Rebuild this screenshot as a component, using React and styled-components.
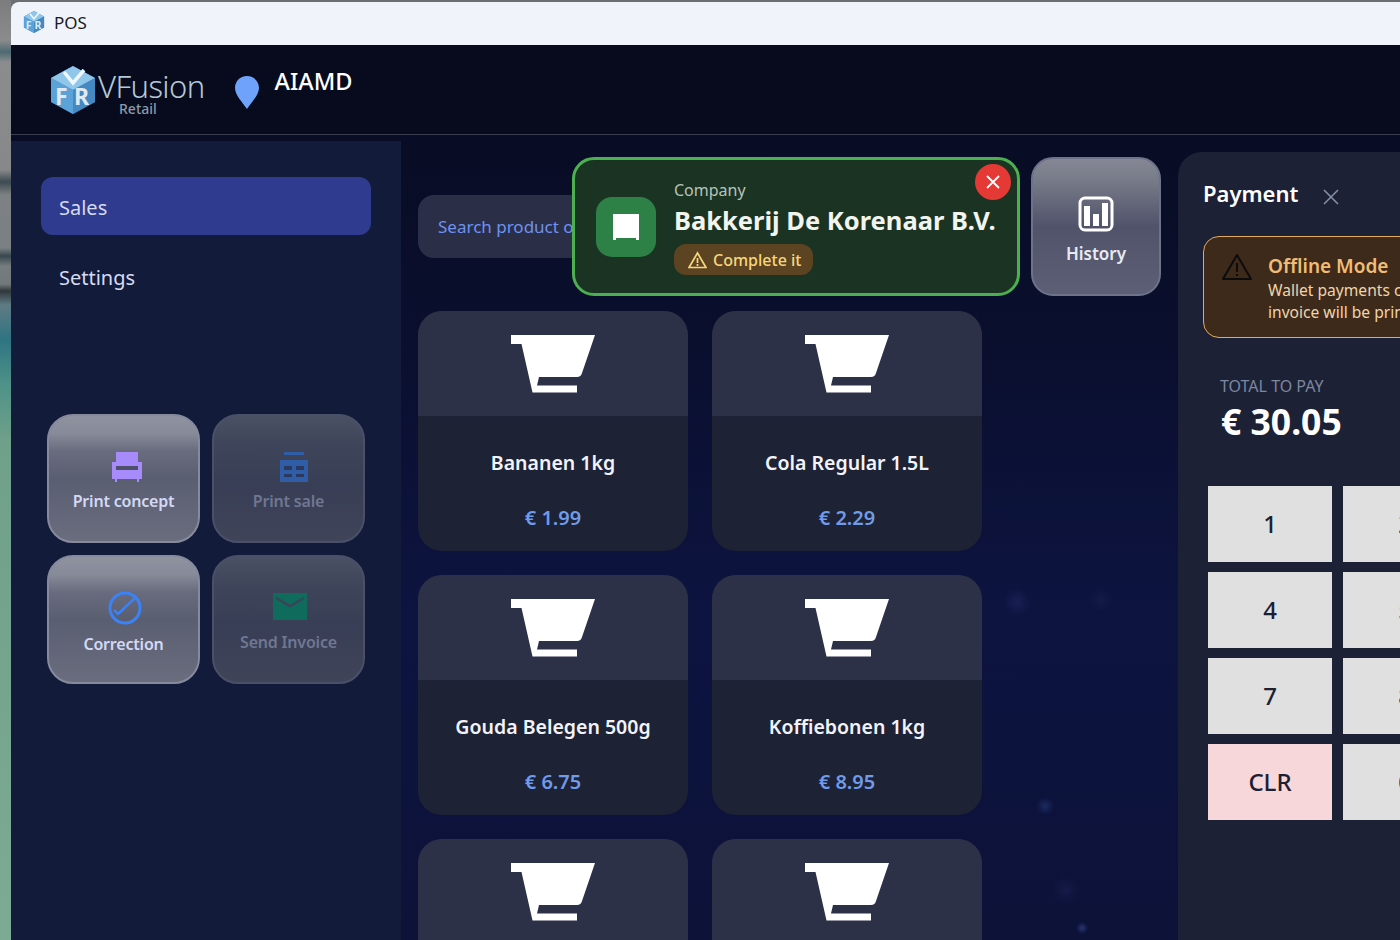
import React from "react";
import styled, { createGlobalStyle } from "styled-components";

const GlobalStyle = createGlobalStyle`
  html, body { margin: 0; padding: 0; background: #5a6066; overflow: hidden; }
  * { box-sizing: border-box; }
  body { font-family: "Noto Sans", "Open Sans", sans-serif; }
`;

const products = [
  { name: "Bananen 1kg", price: "€ 1.99" },
  { name: "Cola Regular 1.5L", price: "€ 2.29" },
  { name: "Gouda Belegen 500g", price: "€ 6.75" },
  { name: "Koffiebonen 1kg", price: "€ 8.95" },
  { name: "", price: "" },
  { name: "", price: "" },
];

const keys = ["1", "2", "3", "4", "5", "6", "7", "8", "9", "CLR", "0", "."];

const LogoCube = ({ size }) => (
  <svg width={size} height={size} viewBox="0 0 48 48">
    <path d="M24 0 46 12V36L24 48 2 36V12Z" fill="#3f86c4" />
    <path d="M24 0 46 12 24 24 2 12Z" fill="#8fc6ea" />
    <path d="M2 12 24 24V48L2 36Z" fill="#5ba2d8" />
    <path d="M24 24 46 12V36L24 48Z" fill="#4489c2" />
    <path d="M15 6 24 17 35 4" fill="none" stroke="#eef7fd" strokeWidth="3.500" />
    <text x="6" y="39" fontSize="23" fontWeight="700" fill="#dfeaf3" fontFamily="Noto Sans">F</text>
    <text x="25" y="39" fontSize="23" fontWeight="700" fill="#dfeaf3" fontFamily="Noto Sans">R</text>
  </svg>
);

const CartIcon = () => (
  <svg width="84" height="58" viewBox="0 0 84 58">
    <path d="M0 0H84L71 38Q70 42 66 42H28L26 50.500H66V57.500H21.500L10.500 9H0Z" fill="#fff" />
  </svg>
);

const PrintConceptIcon = () => (
  <svg width="30" height="30" viewBox="0 0 30 30">
    <path d="M4 0H26V10H30V27H27V30H25V27H5V30H3V27H0V10H4Z" fill="#a78bfa" />
    <rect x="4" y="14" width="22" height="4" fill="#4d5068" />
  </svg>
);

const PrintSaleIcon = () => (
  <svg width="28" height="30" viewBox="0 0 28 30">
    <rect x="4" y="0" width="20" height="3" fill="#2f5da8" />
    <rect x="0" y="8" width="28" height="22" fill="#2f5da8" />
    <path d="M4 14H12V18H4ZM16 14H24V18H16ZM4 22H12V25H4ZM16 22H24V25H16Z" fill="#2a3a5e" />
  </svg>
);

const CorrectionIcon = () => (
  <svg width="34" height="34" viewBox="0 0 34 34" fill="none" stroke="#3b82f6">
    <circle cx="17" cy="17" r="15" strokeWidth="3" />
    <path d="M6 19 10 23 27 7" strokeWidth="2.500" />
  </svg>
);

const MailIcon = () => (
  <svg width="34" height="30" viewBox="0 0 34 30">
    <rect width="34" height="27" fill="#0f6b5c" />
    <path d="M3 5 17 13 31 5" fill="none" stroke="#3b4358" strokeWidth="2.500" />
  </svg>
);

const HistoryIcon = () => (
  <svg width="36" height="36" viewBox="0 0 36 36">
    <rect x="2" y="2" width="32" height="32" rx="5" fill="none" stroke="#fff" strokeWidth="3" />
    <path d="M6 10H12V30H6ZM15 18H21V30H15ZM24 7H30V30H24Z" fill="#fff" />
  </svg>
);

const App = () => (
  <>
    <GlobalStyle />
    <Screen>
      <Wallpaper />
      <Win>
        <TitleBar>
          <LogoCube size={22} />
          <span>POS</span>
        </TitleBar>
        <Header>
          <LogoCube size={48} />
          <Brand>
            <BrandName>VFusion</BrandName>
            <BrandSub>Retail</BrandSub>
          </Brand>
          <Pin viewBox="0 0 24 33" width="24" height="33">
            <path d="M12 0C5 0 0 5.500 0 12 0 19 8 27 12 33 16 27 24 19 24 12 24 5.500 19 0 12 0Z" fill="#6ea2fb" />
          </Pin>
          <StoreName>AIAMD</StoreName>
        </Header>
        <Body>
          <Sidebar>
            <NavItem $active>Sales</NavItem>
            <NavItem>Settings</NavItem>
            <ActionGrid>
              <GlassButton $shift={6}>
                <PrintConceptIcon />
                <span>Print concept</span>
              </GlassButton>
              <GlassButton $dim $shift={10}>
                <PrintSaleIcon />
                <span>Print sale</span>
              </GlassButton>
              <GlassButton $shift={2}>
                <CorrectionIcon />
                <span>Correction</span>
              </GlassButton>
              <GlassButton $dim $shift={2}>
                <MailIcon />
                <span>Send Invoice</span>
              </GlassButton>
            </ActionGrid>
          </Sidebar>
          <Main>
            <Toolbar>
              <SearchBox>Search product or scan barcode</SearchBox>
              <HistoryButton>
                <HistoryIcon />
                <span>History</span>
              </HistoryButton>
              <CompanyBanner>
                <CompanyIcon>
                  <svg width="26" height="26" viewBox="0 0 26 26">
                    <path d="M0 0H26V26H23V24H3V26H0Z" fill="#fff" />
                  </svg>
                </CompanyIcon>
                <CompanyText>
                  <CompanyLabel>Company</CompanyLabel>
                  <CompanyName>Bakkerij De Korenaar B.V.</CompanyName>
                  <CompleteTag>
                    <svg width="19" height="18" viewBox="0 0 19 18" fill="none" stroke="#f6d77c" strokeWidth="1.700">
                      <path d="M9.500 2 18 16.500H1Z" />
                      <path d="M9.500 7V12M9.500 13V15" />
                    </svg>
                    Complete it
                  </CompleteTag>
                </CompanyText>
                <CloseRound>
                  <svg width="16" height="16" viewBox="0 0 16 16" stroke="#fff" strokeWidth="1.800">
                    <path d="M2 2 14 14M14 2 2 14" />
                  </svg>
                </CloseRound>
              </CompanyBanner>
            </Toolbar>
            <ProductGrid>
              {products.map((p, i) => (
                <ProductCard key={i}>
                  <ProductImage>
                    <CartIcon />
                  </ProductImage>
                  <ProductName>{p.name}</ProductName>
                  <ProductPrice>{p.price}</ProductPrice>
                </ProductCard>
              ))}
            </ProductGrid>
          </Main>
          <Payment>
            <PaymentHead>
              <PaymentTitle>Payment</PaymentTitle>
              <CloseIcon width="18" height="18" viewBox="0 0 18 18" stroke="#8791a8" strokeWidth="1.500">
                <path d="M2 2 16 16M16 2 2 16" />
              </CloseIcon>
            </PaymentHead>
            <OfflineBox>
              <svg width="32" height="28" viewBox="0 0 32 28" fill="none" stroke="#0c0c0c" strokeWidth="2" strokeLinejoin="round">
                <path d="M16 2 30 26H2Z" />
                <path d="M16 10V19M16 21V23" />
              </svg>
              <OfflineText>
                <OfflineTitle>Offline Mode</OfflineTitle>
                <OfflineLine>Wallet payments can not be used, the</OfflineLine>
                <OfflineLine>invoice will be printed afterwards</OfflineLine>
              </OfflineText>
            </OfflineBox>
            <TotalLabel>TOTAL TO PAY</TotalLabel>
            <TotalAmount>€ 30.05</TotalAmount>
            <Keypad>
              {keys.map((k) => (
                <Key key={k} $clear={k === "CLR"}>{k}</Key>
              ))}
            </Keypad>
          </Payment>
        </Body>
      </Win>
    </Screen>
  </>
);

export default App;

const Screen = styled.div`
  display: flex;
  width: 1400px;
  height: 940px;
  overflow: hidden;
  background: #6b6f72;
`;
const Wallpaper = styled.div`
  flex: 0 0 11px;
  background: linear-gradient(180deg,
    #7c7c7e 0, #8b8b8d 40px, #4d6a72 52px, #8a8c8e 62px, #86888a 170px, #3d4a50 182px,
    #7d8184 195px, #7a8084 248px, #37474d 256px, #747c80 266px, #72797d 284px, #30383c 291px,
    #5f7b84 305px, #2f7482 340px, #4f9288 385px, #6fa08a 440px, #7daa92 100%);
`;
const Win = styled.div`
  flex: 1;
  min-width: 0;
  display: flex;
  flex-direction: column;
  margin-top: 2px;
  border-top-left-radius: 8px;
  overflow: hidden;
`;
const TitleBar = styled.div`
  flex: 0 0 43px;
  display: flex;
  align-items: center;
  gap: 9px;
  padding: 0 0 3px 12px;
  background: #f0f3f9;
  color: #1a1a1a;
  font-size: 17px;
`;
const Header = styled.div`
  flex: 0 0 90px;
  display: flex;
  align-items: flex-start;
  padding: 21px 0 0 38px;
  background: #080b1e;
  border-bottom: 1px solid #3a3d4c;
`;
const Brand = styled.div`
  display: flex;
  flex-direction: column;
  align-items: flex-start;
  margin: 5px 0 0 1px;
`;
const BrandName = styled.div`
  font-size: 31px;
  line-height: 31px;
  letter-spacing: -0.6px;
  color: #b4c8d8;
  font-weight: 300;
`;
const BrandSub = styled.div`
  font-size: 14px;
  line-height: 14px;
  margin-left: 21px;
  color: #8a9aa8;
  font-weight: 500;
`;
const Pin = styled.svg`
  margin: 10px 0 0 30px;
`;
const StoreName = styled.div`
  margin: -1px 0 0 16px;
  font-size: 23.500px;
  line-height: 33px;
  font-weight: 500;
  color: #fff;
`;
const Body = styled.div`
  flex: 1;
  min-height: 0;
  display: flex;
  background:
    radial-gradient(circle 9px at 1034px 671px, #1a2a60 0%, transparent 100%),
    radial-gradient(circle 14px at 1006px 467px, #191f52 0%, transparent 100%),
    radial-gradient(circle 12px at 1090px 465px, #151a48 0%, transparent 100%),
    radial-gradient(circle 6px at 1071px 793px, #2a3570 0%, transparent 100%),
    radial-gradient(circle 14px at 1055px 755px, #151a48 0%, transparent 100%),
    linear-gradient(180deg, #080c24 0%, #0a0f2e 25%, #0d1440 60%, #0c1238 100%);
`;
const Sidebar = styled.aside`
  flex: 0 0 390px;
  margin-top: 6px;
  padding: 36px 30px 0;
  background: #131b3b;
`;
const NavItem = styled.div`
  height: 58px;
  margin-bottom: 12px;
  padding: 2px 0 0 18px;
  display: flex;
  align-items: center;
  border-radius: 12px;
  font-size: 20px;
  color: #d6dcf0;
  background: ${(p) => (p.$active ? "#2f3b8e" : "transparent")};
`;
const ActionGrid = styled.div`
  display: grid;
  grid-template-columns: 153px 153px;
  grid-auto-rows: 129px;
  gap: 12px;
  margin: 109px 0 0 6px;
`;
const GlassButton = styled.div`
  display: flex;
  flex-direction: column;
  align-items: center;
  justify-content: center;
  gap: 8px;
  padding-top: 6px;
  border-radius: 26px;
  border: 2px solid ${(p) => (p.$dim ? "#4a5068" : "#868a9c")};
  background: ${(p) => (p.$dim
    ? "linear-gradient(180deg, #4b5164 0%, #3e4459 24%, #383e55 55%, #3f4459 100%)"
    : "linear-gradient(180deg, #8f929f 0%, #878a98 14%, #696c7e 28%, #5a5e71 50%, #6a6d7e 100%)")};
  color: ${(p) => (p.$dim ? "#6f7792" : "#d3d9f4")};
  font-size: 16px;
  font-weight: 600;
  letter-spacing: -0.2px;
  white-space: nowrap;

  svg {
    margin-left: ${(p) => p.$shift || 0}px;
  }
`;
const Main = styled.main`
  flex: 0 0 777px;
  min-width: 0;
  padding: 22px 17px 0;
`;
const Toolbar = styled.div`
  position: relative;
  display: flex;
  align-items: center;
  justify-content: space-between;
  height: 139px;
  margin-bottom: 15px;
  width: 743px;
`;
const SearchBox = styled.div`
  width: 540px;
  height: 63px;
  padding-left: 20px;
  display: flex;
  align-items: center;
  border-radius: 16px;
  background: #2a2f47;
  color: #6e92f0;
  font-size: 17px;
  white-space: nowrap;
  overflow: hidden;
`;
const HistoryButton = styled.div`
  width: 130px;
  height: 139px;
  display: flex;
  flex-direction: column;
  align-items: center;
  justify-content: center;
  gap: 10px;
  padding-top: 8px;
  border-radius: 22px;
  border: 2px solid #6f7389;
  background: linear-gradient(180deg, #858894 0%, #777a88 16%, #50536a 50%, #5c5f75 100%);
  color: #e8eaf4;
  font-size: 17px;
  font-weight: 600;
`;
const CompanyBanner = styled.div`
  position: absolute;
  left: 154px;
  top: 0;
  width: 448px;
  height: 139px;
  display: flex;
  align-items: center;
  gap: 18px;
  padding: 0 21px;
  border: 3px solid #4caf50;
  border-radius: 22px;
  background: #1b3323;
`;
const CompanyIcon = styled.div`
  flex: 0 0 60px;
  height: 60px;
  display: flex;
  align-items: center;
  justify-content: center;
  border-radius: 16px;
  background: #2e8146;
`;
const CompanyText = styled.div`
  display: flex;
  flex-direction: column;
  align-items: flex-start;
`;
const CompanyLabel = styled.div`
  font-size: 16px;
  line-height: 24px;
  color: #b6c4b8;
`;
const CompanyName = styled.div`
  font-size: 25.500px;
  line-height: 36px;
  font-weight: 700;
  color: #f2f4ee;
  white-space: nowrap;
`;
const CompleteTag = styled.div`
  display: flex;
  align-items: center;
  gap: 6px;
  margin-top: 6px;
  height: 31px;
  padding: 0 12px 0 14px;
  border-radius: 12px;
  background: #5c4322;
  color: #f6d77c;
  font-size: 16px;
  font-weight: 500;
`;
const CloseRound = styled.div`
  position: absolute;
  top: 4px;
  right: 6px;
  width: 36px;
  height: 36px;
  display: flex;
  align-items: center;
  justify-content: center;
  border-radius: 50%;
  background: #e53935;
`;
const ProductGrid = styled.div`
  display: grid;
  grid-template-columns: 270px 270px;
  grid-auto-rows: 240px;
  gap: 24px;
`;
const ProductCard = styled.div`
  display: flex;
  flex-direction: column;
  align-items: center;
  overflow: hidden;
  border-radius: 24px;
  background: #1e2235;
`;
const ProductImage = styled.div`
  flex: 0 0 105px;
  align-self: stretch;
  display: flex;
  justify-content: center;
  padding: 24px 1px 0 0;
  background: #2c3148;
`;
const ProductName = styled.div`
  margin-top: 33px;
  font-size: 19.500px;
  line-height: 28px;
  font-weight: 600;
  color: #f2f3f8;
`;
const ProductPrice = styled.div`
  margin-top: 27px;
  font-size: 20px;
  line-height: 28px;
  font-weight: 600;
  color: #6f9be8;
`;
const Payment = styled.aside`
  flex: 1;
  min-width: 0;
  margin-top: 17px;
  padding: 24px 0 0 25px;
  border-top-left-radius: 24px;
  background: #1c2136;
  white-space: nowrap;
  overflow: hidden;
`;
const PaymentHead = styled.div`
  display: flex;
  align-items: center;
  gap: 24px;
  height: 34px;
  margin-bottom: 26px;
`;
const PaymentTitle = styled.div`
  font-size: 22px;
  font-weight: 600;
  color: #fff;
`;
const CloseIcon = styled.svg`
  margin-top: 8px;
`;
const OfflineBox = styled.div`
  display: flex;
  align-items: flex-start;
  gap: 15px;
  width: 400px;
  height: 102px;
  padding: 16px 17px;
  border: 1.500px solid #e3aa5c;
  border-radius: 16px;
  background: #3e2a1b;
`;
const OfflineText = styled.div`
  display: flex;
  flex-direction: column;
`;
const OfflineTitle = styled.div`
  font-size: 19px;
  line-height: 26px;
  font-weight: 600;
  color: #f0bd72;
`;
const OfflineLine = styled.div`
  font-size: 15.600px;
  line-height: 22px;
  color: #f0d5aa;
`;
const TotalLabel = styled.div`
  margin: 37px 0 0 17px;
  font-size: 16px;
  line-height: 22px;
  color: #7c87a0;
`;
const TotalAmount = styled.div`
  margin: 2px 0 0 18px;
  font-size: 35.500px;
  line-height: 44px;
  font-weight: 700;
  color: #fff;
`;
const Keypad = styled.div`
  display: grid;
  grid-template-columns: repeat(3, 124px);
  grid-auto-rows: 75.500px;
  column-gap: 11px;
  row-gap: 10.500px;
  margin: 43px 0 0 5px;
`;
const Key = styled.div`
  display: flex;
  align-items: center;
  justify-content: center;
  font-size: 24px;
  font-weight: 500;
  color: #1b2033;
  background: ${(p) => (p.$clear ? "#f8d7da" : "#e0e0e0")};
`;
